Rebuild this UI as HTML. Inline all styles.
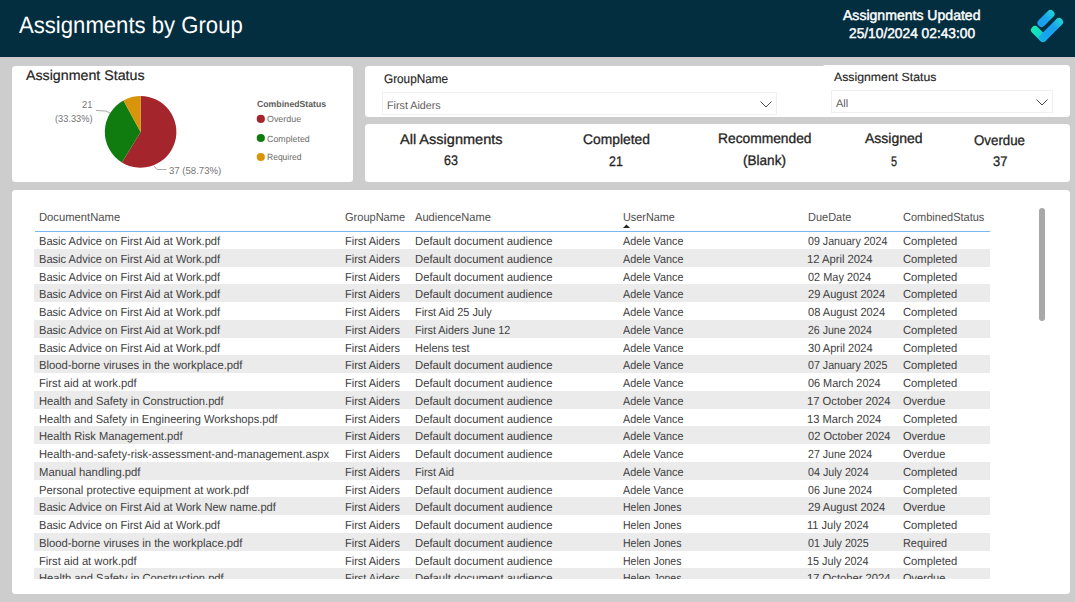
<!DOCTYPE html>
<html><head><meta charset="utf-8"><style>
html,body{margin:0;padding:0;}
body{width:1075px;height:602px;position:relative;overflow:hidden;background:#cdcdcd;font-family:"Liberation Sans",sans-serif;}
.t{position:absolute;white-space:nowrap;text-rendering:geometricPrecision;}
</style></head><body>
<div style="position:absolute;left:0;top:0;width:1075px;height:57px;background:#022e3f"></div>
<div class="t" style="left:18.70px;top:14px;font-size:23.5px;line-height:23.5px;color:#ffffff;transform:scaleX(0.9412);transform-origin:0 0;">Assignments by Group</div>
<div class="t" style="left:843.40px;top:8px;font-size:14.1px;line-height:14.1px;color:#ffffff;transform:scaleX(0.9971);transform-origin:0 0;-webkit-text-stroke:0.45px #fff;">Assignments Updated</div>
<div class="t" style="left:849.40px;top:26px;font-size:14.1px;line-height:14.1px;color:#ffffff;transform:scaleX(0.9752);transform-origin:0 0;-webkit-text-stroke:0.45px #fff;">25/10/2024 02:43:00</div>
<svg style="position:absolute;left:1020px;top:0px" width="55" height="55" viewBox="0 0 55 55">
<defs>
<linearGradient id="g1" gradientUnits="userSpaceOnUse" x1="17.5" y1="27" x2="34.5" y2="10"><stop offset="0" stop-color="#1a9cf0"/><stop offset="0.5" stop-color="#1aa4f0"/><stop offset="0.78" stop-color="#1ec6dc"/><stop offset="1" stop-color="#22d2d6"/></linearGradient>
<linearGradient id="g3" gradientUnits="userSpaceOnUse" x1="19" y1="42" x2="43" y2="18"><stop offset="0" stop-color="#12b8e2"/><stop offset="0.25" stop-color="#18a4ee"/><stop offset="0.62" stop-color="#1aa0f0"/><stop offset="0.85" stop-color="#1ec8dc"/><stop offset="1" stop-color="#22d2d6"/></linearGradient>
<linearGradient id="g2" gradientUnits="userSpaceOnUse" x1="11" y1="26" x2="27" y2="42"><stop offset="0" stop-color="#10ecb6"/><stop offset="0.5" stop-color="#12dcc0"/><stop offset="1" stop-color="#14c0dc"/></linearGradient>
</defs>
<line x1="21.5" y1="23" x2="30.5" y2="14" stroke="url(#g1)" stroke-width="8" stroke-linecap="round"/>
<line x1="15" y1="30" x2="23" y2="38" stroke="url(#g2)" stroke-width="8" stroke-linecap="round"/>
<line x1="23" y1="38" x2="39" y2="22" stroke="url(#g3)" stroke-width="8" stroke-linecap="round"/>
</svg>
<div style="position:absolute;left:12px;top:66px;width:341px;height:116px;background:#fff;border-radius:3.5px"></div>
<div style="position:absolute;left:365px;top:66px;width:705px;height:51px;background:#fff;border-radius:3.5px"></div>
<div style="position:absolute;left:365px;top:124px;width:705px;height:58px;background:#fff;border-radius:3.5px"></div>
<div style="position:absolute;left:822px;top:65px;width:248px;height:20px;background:#fff;border-radius:3.5px 3.5px 0 0"></div>
<div style="position:absolute;left:12px;top:190px;width:1058px;height:404px;background:#fff;border-radius:3.5px"></div>
<div class="t" style="left:25.50px;top:68px;font-size:14.0px;line-height:14.0px;color:#252423;transform:scaleX(1.0154);transform-origin:0 0;-webkit-text-stroke:0.2px #252423;">Assignment Status</div>
<svg style="position:absolute;left:0;top:0" width="360" height="190"><path d="M140.6,131.9 L140.60,96.10 A35.8,35.8 0 1 1 121.93,162.45 Z" fill="#a4262c"/><path d="M140.6,131.9 L121.93,162.45 A35.8,35.8 0 0 1 123.48,100.46 Z" fill="#107c10"/><path d="M140.6,131.9 L123.48,100.46 A35.8,35.8 0 0 1 140.60,96.10 Z" fill="#d9950a"/><polyline points="96,110.5 106,111 110,113" fill="none" stroke="#aaaaaa" stroke-width="1"/><polyline points="154,166 157,169.5 166.5,169.5" fill="none" stroke="#aaaaaa" stroke-width="1"/><circle cx="260.8" cy="118.9" r="4.1" fill="#a4262c"/><circle cx="260.8" cy="138" r="4.1" fill="#107c10"/><circle cx="260.8" cy="157" r="4.1" fill="#d9950a"/></svg>
<div class="t" style="left:81.80px;top:101px;font-size:10.2px;line-height:10.2px;color:#777777;transform:scaleX(0.9182);transform-origin:0 0;">21</div>
<div class="t" style="left:54.70px;top:115px;font-size:10.2px;line-height:10.2px;color:#777777;transform:scaleX(0.9073);transform-origin:0 0;">(33.33%)</div>
<div class="t" style="left:169.00px;top:167px;font-size:10.2px;line-height:10.2px;color:#777777;transform:scaleX(0.9418);transform-origin:0 0;">37 (58.73%)</div>
<div class="t" style="left:256.60px;top:100px;font-size:8.9px;line-height:8.9px;font-weight:700;color:#605e5c;transform:scaleX(0.9803);transform-origin:0 0;">CombinedStatus</div>
<div class="t" style="left:266.90px;top:115px;font-size:9.0px;line-height:9.0px;color:#6e6d6c;transform:scaleX(0.9882);transform-origin:0 0;">Overdue</div>
<div class="t" style="left:266.90px;top:135px;font-size:9.0px;line-height:9.0px;color:#6e6d6c;transform:scaleX(0.9818);transform-origin:0 0;">Completed</div>
<div class="t" style="left:266.90px;top:153px;font-size:9.0px;line-height:9.0px;color:#6e6d6c;transform:scaleX(0.9459);transform-origin:0 0;">Required</div>
<div class="t" style="left:384.00px;top:73px;font-size:12.6px;line-height:12.6px;color:#252423;transform:scaleX(0.9338);transform-origin:0 0;-webkit-text-stroke:0.15px #252423;">GroupName</div>
<div style="position:absolute;left:382px;top:92px;width:394.5px;height:22.5px;border:1px solid #f0f0f0;box-sizing:border-box"></div>
<div class="t" style="left:386.80px;top:101px;font-size:10.9px;line-height:10.9px;color:#605e5c;transform:scaleX(0.9855);transform-origin:0 0;">First Aiders</div>
<svg style="position:absolute;left:760.2px;top:100.8px" width="13" height="8" viewBox="0 0 13 8"><polyline points="0.5,0.5 6,6 11.5,0.5" fill="none" stroke="#4a4a4a" stroke-width="1"/></svg>
<div class="t" style="left:833.80px;top:72px;font-size:11.9px;line-height:11.9px;color:#252423;transform:scaleX(1.0323);transform-origin:0 0;-webkit-text-stroke:0.15px #252423;">Assignment Status</div>
<div style="position:absolute;left:831px;top:90.3px;width:221.5px;height:22.8px;border:1px solid #f0f0f0;box-sizing:border-box"></div>
<div class="t" style="left:836.00px;top:99px;font-size:10.9px;line-height:10.9px;color:#605e5c;transform:scaleX(1.0083);transform-origin:0 0;">All</div>
<svg style="position:absolute;left:1036px;top:99.2px" width="13" height="8" viewBox="0 0 13 8"><polyline points="0.5,0.5 6,6 11.5,0.5" fill="none" stroke="#4a4a4a" stroke-width="1"/></svg>
<div class="t" style="left:399.50px;top:132px;font-size:14.0px;line-height:14.0px;color:#252423;transform:scaleX(1.0374);transform-origin:0 0;-webkit-text-stroke:0.3px #252423;">All Assignments</div>
<div class="t" style="left:444.10px;top:153px;font-size:14.0px;line-height:14.0px;color:#252423;transform:scaleX(0.8933);transform-origin:0 0;-webkit-text-stroke:0.3px #252423;">63</div>
<div class="t" style="left:582.60px;top:132px;font-size:14.0px;line-height:14.0px;color:#252423;transform:scaleX(0.9882);transform-origin:0 0;-webkit-text-stroke:0.3px #252423;">Completed</div>
<div class="t" style="left:609.40px;top:154px;font-size:14.0px;line-height:14.0px;color:#252423;transform:scaleX(0.8867);transform-origin:0 0;-webkit-text-stroke:0.3px #252423;">21</div>
<div class="t" style="left:718.20px;top:131px;font-size:14.0px;line-height:14.0px;color:#252423;transform:scaleX(0.9853);transform-origin:0 0;-webkit-text-stroke:0.3px #252423;">Recommended</div>
<div class="t" style="left:743.40px;top:153px;font-size:14.0px;line-height:14.0px;color:#252423;transform:scaleX(0.9682);transform-origin:0 0;-webkit-text-stroke:0.3px #252423;">(Blank)</div>
<div class="t" style="left:865.40px;top:131px;font-size:14.0px;line-height:14.0px;color:#252423;transform:scaleX(0.9982);transform-origin:0 0;-webkit-text-stroke:0.3px #252423;">Assigned</div>
<div class="t" style="left:890.70px;top:154px;font-size:14.0px;line-height:14.0px;color:#252423;transform:scaleX(0.7750);transform-origin:0 0;-webkit-text-stroke:0.3px #252423;">5</div>
<div class="t" style="left:974.20px;top:133px;font-size:14.0px;line-height:14.0px;color:#252423;transform:scaleX(0.9500);transform-origin:0 0;-webkit-text-stroke:0.3px #252423;">Overdue</div>
<div class="t" style="left:992.60px;top:154px;font-size:14.0px;line-height:14.0px;color:#252423;transform:scaleX(0.9267);transform-origin:0 0;-webkit-text-stroke:0.3px #252423;">37</div>
<div style="position:absolute;left:0;top:0;width:1075px;height:578.9px;overflow:hidden"><div style="position:absolute;left:34.5px;top:231px;width:955.5px;height:1px;background:#7ab8f2"></div><div class="t" style="left:38.90px;top:236px;font-size:11.8px;line-height:11.8px;color:#404040;transform:scaleX(0.9404);transform-origin:0 0;">Basic Advice on First Aid at Work.pdf</div><div class="t" style="left:344.60px;top:236px;font-size:11.8px;line-height:11.8px;color:#404040;transform:scaleX(0.9305);transform-origin:0 0;">First Aiders</div><div class="t" style="left:415.30px;top:236px;font-size:11.8px;line-height:11.8px;color:#404040;transform:scaleX(0.9573);transform-origin:0 0;">Default document audience</div><div class="t" style="left:623.00px;top:236px;font-size:11.8px;line-height:11.8px;color:#404040;transform:scaleX(0.9152);transform-origin:0 0;">Adele Vance</div><div class="t" style="left:807.50px;top:236px;font-size:11.8px;line-height:11.8px;color:#404040;transform:scaleX(0.9034);transform-origin:0 0;">09 January 2024</div><div class="t" style="left:902.90px;top:236px;font-size:11.8px;line-height:11.8px;color:#404040;transform:scaleX(0.9509);transform-origin:0 0;">Completed</div><div style="position:absolute;left:34.3px;top:248.76px;width:955.7px;height:17.76px;background:#ebebeb"></div><div class="t" style="left:38.90px;top:254px;font-size:11.8px;line-height:11.8px;color:#404040;transform:scaleX(0.9404);transform-origin:0 0;">Basic Advice on First Aid at Work.pdf</div><div class="t" style="left:344.60px;top:254px;font-size:11.8px;line-height:11.8px;color:#404040;transform:scaleX(0.9305);transform-origin:0 0;">First Aiders</div><div class="t" style="left:415.30px;top:254px;font-size:11.8px;line-height:11.8px;color:#404040;transform:scaleX(0.9573);transform-origin:0 0;">Default document audience</div><div class="t" style="left:623.00px;top:254px;font-size:11.8px;line-height:11.8px;color:#404040;transform:scaleX(0.9152);transform-origin:0 0;">Adele Vance</div><div class="t" style="left:806.55px;top:254px;font-size:11.8px;line-height:11.8px;color:#404040;transform:scaleX(0.9529);transform-origin:0 0;">12 April 2024</div><div class="t" style="left:902.90px;top:254px;font-size:11.8px;line-height:11.8px;color:#404040;transform:scaleX(0.9509);transform-origin:0 0;">Completed</div><div class="t" style="left:38.90px;top:272px;font-size:11.8px;line-height:11.8px;color:#404040;transform:scaleX(0.9404);transform-origin:0 0;">Basic Advice on First Aid at Work.pdf</div><div class="t" style="left:344.60px;top:272px;font-size:11.8px;line-height:11.8px;color:#404040;transform:scaleX(0.9305);transform-origin:0 0;">First Aiders</div><div class="t" style="left:415.30px;top:272px;font-size:11.8px;line-height:11.8px;color:#404040;transform:scaleX(0.9573);transform-origin:0 0;">Default document audience</div><div class="t" style="left:623.00px;top:272px;font-size:11.8px;line-height:11.8px;color:#404040;transform:scaleX(0.9152);transform-origin:0 0;">Adele Vance</div><div class="t" style="left:807.50px;top:272px;font-size:11.8px;line-height:11.8px;color:#404040;transform:scaleX(0.9265);transform-origin:0 0;">02 May 2024</div><div class="t" style="left:902.90px;top:272px;font-size:11.8px;line-height:11.8px;color:#404040;transform:scaleX(0.9509);transform-origin:0 0;">Completed</div><div style="position:absolute;left:34.3px;top:284.28px;width:955.7px;height:17.76px;background:#ebebeb"></div><div class="t" style="left:38.90px;top:289px;font-size:11.8px;line-height:11.8px;color:#404040;transform:scaleX(0.9404);transform-origin:0 0;">Basic Advice on First Aid at Work.pdf</div><div class="t" style="left:344.60px;top:289px;font-size:11.8px;line-height:11.8px;color:#404040;transform:scaleX(0.9305);transform-origin:0 0;">First Aiders</div><div class="t" style="left:415.30px;top:289px;font-size:11.8px;line-height:11.8px;color:#404040;transform:scaleX(0.9573);transform-origin:0 0;">Default document audience</div><div class="t" style="left:623.00px;top:289px;font-size:11.8px;line-height:11.8px;color:#404040;transform:scaleX(0.9152);transform-origin:0 0;">Adele Vance</div><div class="t" style="left:807.50px;top:289px;font-size:11.8px;line-height:11.8px;color:#404040;transform:scaleX(0.9402);transform-origin:0 0;">29 August 2024</div><div class="t" style="left:902.90px;top:289px;font-size:11.8px;line-height:11.8px;color:#404040;transform:scaleX(0.9509);transform-origin:0 0;">Completed</div><div class="t" style="left:38.90px;top:307px;font-size:11.8px;line-height:11.8px;color:#404040;transform:scaleX(0.9404);transform-origin:0 0;">Basic Advice on First Aid at Work.pdf</div><div class="t" style="left:344.60px;top:307px;font-size:11.8px;line-height:11.8px;color:#404040;transform:scaleX(0.9305);transform-origin:0 0;">First Aiders</div><div class="t" style="left:415.30px;top:307px;font-size:11.8px;line-height:11.8px;color:#404040;transform:scaleX(0.9217);transform-origin:0 0;">First Aid 25 July</div><div class="t" style="left:623.00px;top:307px;font-size:11.8px;line-height:11.8px;color:#404040;transform:scaleX(0.9152);transform-origin:0 0;">Adele Vance</div><div class="t" style="left:807.50px;top:307px;font-size:11.8px;line-height:11.8px;color:#404040;transform:scaleX(0.9402);transform-origin:0 0;">08 August 2024</div><div class="t" style="left:902.90px;top:307px;font-size:11.8px;line-height:11.8px;color:#404040;transform:scaleX(0.9509);transform-origin:0 0;">Completed</div><div style="position:absolute;left:34.3px;top:319.80px;width:955.7px;height:17.76px;background:#ebebeb"></div><div class="t" style="left:38.90px;top:325px;font-size:11.8px;line-height:11.8px;color:#404040;transform:scaleX(0.9404);transform-origin:0 0;">Basic Advice on First Aid at Work.pdf</div><div class="t" style="left:344.60px;top:325px;font-size:11.8px;line-height:11.8px;color:#404040;transform:scaleX(0.9305);transform-origin:0 0;">First Aiders</div><div class="t" style="left:415.30px;top:325px;font-size:11.8px;line-height:11.8px;color:#404040;transform:scaleX(0.9144);transform-origin:0 0;">First Aiders June 12</div><div class="t" style="left:623.00px;top:325px;font-size:11.8px;line-height:11.8px;color:#404040;transform:scaleX(0.9152);transform-origin:0 0;">Adele Vance</div><div class="t" style="left:807.50px;top:325px;font-size:11.8px;line-height:11.8px;color:#404040;transform:scaleX(0.8931);transform-origin:0 0;">26 June 2024</div><div class="t" style="left:902.90px;top:325px;font-size:11.8px;line-height:11.8px;color:#404040;transform:scaleX(0.9509);transform-origin:0 0;">Completed</div><div class="t" style="left:38.90px;top:343px;font-size:11.8px;line-height:11.8px;color:#404040;transform:scaleX(0.9404);transform-origin:0 0;">Basic Advice on First Aid at Work.pdf</div><div class="t" style="left:344.60px;top:343px;font-size:11.8px;line-height:11.8px;color:#404040;transform:scaleX(0.9305);transform-origin:0 0;">First Aiders</div><div class="t" style="left:415.30px;top:343px;font-size:11.8px;line-height:11.8px;color:#404040;transform:scaleX(0.9254);transform-origin:0 0;">Helens test</div><div class="t" style="left:623.00px;top:343px;font-size:11.8px;line-height:11.8px;color:#404040;transform:scaleX(0.9152);transform-origin:0 0;">Adele Vance</div><div class="t" style="left:807.50px;top:343px;font-size:11.8px;line-height:11.8px;color:#404040;transform:scaleX(0.9391);transform-origin:0 0;">30 April 2024</div><div class="t" style="left:902.90px;top:343px;font-size:11.8px;line-height:11.8px;color:#404040;transform:scaleX(0.9509);transform-origin:0 0;">Completed</div><div style="position:absolute;left:34.3px;top:355.32px;width:955.7px;height:17.76px;background:#ebebeb"></div><div class="t" style="left:38.90px;top:360px;font-size:11.8px;line-height:11.8px;color:#404040;transform:scaleX(0.9545);transform-origin:0 0;">Blood-borne viruses in the workplace.pdf</div><div class="t" style="left:344.60px;top:360px;font-size:11.8px;line-height:11.8px;color:#404040;transform:scaleX(0.9305);transform-origin:0 0;">First Aiders</div><div class="t" style="left:415.30px;top:360px;font-size:11.8px;line-height:11.8px;color:#404040;transform:scaleX(0.9573);transform-origin:0 0;">Default document audience</div><div class="t" style="left:623.00px;top:360px;font-size:11.8px;line-height:11.8px;color:#404040;transform:scaleX(0.9152);transform-origin:0 0;">Adele Vance</div><div class="t" style="left:807.50px;top:360px;font-size:11.8px;line-height:11.8px;color:#404040;transform:scaleX(0.9034);transform-origin:0 0;">07 January 2025</div><div class="t" style="left:902.90px;top:360px;font-size:11.8px;line-height:11.8px;color:#404040;transform:scaleX(0.9509);transform-origin:0 0;">Completed</div><div class="t" style="left:38.90px;top:378px;font-size:11.8px;line-height:11.8px;color:#404040;transform:scaleX(0.9485);transform-origin:0 0;">First aid at work.pdf</div><div class="t" style="left:344.60px;top:378px;font-size:11.8px;line-height:11.8px;color:#404040;transform:scaleX(0.9305);transform-origin:0 0;">First Aiders</div><div class="t" style="left:415.30px;top:378px;font-size:11.8px;line-height:11.8px;color:#404040;transform:scaleX(0.9573);transform-origin:0 0;">Default document audience</div><div class="t" style="left:623.00px;top:378px;font-size:11.8px;line-height:11.8px;color:#404040;transform:scaleX(0.9152);transform-origin:0 0;">Adele Vance</div><div class="t" style="left:807.50px;top:378px;font-size:11.8px;line-height:11.8px;color:#404040;transform:scaleX(0.9215);transform-origin:0 0;">06 March 2024</div><div class="t" style="left:902.90px;top:378px;font-size:11.8px;line-height:11.8px;color:#404040;transform:scaleX(0.9509);transform-origin:0 0;">Completed</div><div style="position:absolute;left:34.3px;top:390.84px;width:955.7px;height:17.76px;background:#ebebeb"></div><div class="t" style="left:38.90px;top:396px;font-size:11.8px;line-height:11.8px;color:#404040;transform:scaleX(0.9449);transform-origin:0 0;">Health and Safety in Construction.pdf</div><div class="t" style="left:344.60px;top:396px;font-size:11.8px;line-height:11.8px;color:#404040;transform:scaleX(0.9305);transform-origin:0 0;">First Aiders</div><div class="t" style="left:415.30px;top:396px;font-size:11.8px;line-height:11.8px;color:#404040;transform:scaleX(0.9573);transform-origin:0 0;">Default document audience</div><div class="t" style="left:623.00px;top:396px;font-size:11.8px;line-height:11.8px;color:#404040;transform:scaleX(0.9152);transform-origin:0 0;">Adele Vance</div><div class="t" style="left:806.55px;top:396px;font-size:11.8px;line-height:11.8px;color:#404040;transform:scaleX(0.9494);transform-origin:0 0;">17 October 2024</div><div class="t" style="left:902.90px;top:396px;font-size:11.8px;line-height:11.8px;color:#404040;transform:scaleX(0.9356);transform-origin:0 0;">Overdue</div><div class="t" style="left:38.90px;top:414px;font-size:11.8px;line-height:11.8px;color:#404040;transform:scaleX(0.9388);transform-origin:0 0;">Health and Safety in Engineering Workshops.pdf</div><div class="t" style="left:344.60px;top:414px;font-size:11.8px;line-height:11.8px;color:#404040;transform:scaleX(0.9305);transform-origin:0 0;">First Aiders</div><div class="t" style="left:415.30px;top:414px;font-size:11.8px;line-height:11.8px;color:#404040;transform:scaleX(0.9573);transform-origin:0 0;">Default document audience</div><div class="t" style="left:623.00px;top:414px;font-size:11.8px;line-height:11.8px;color:#404040;transform:scaleX(0.9152);transform-origin:0 0;">Adele Vance</div><div class="t" style="left:806.56px;top:414px;font-size:11.8px;line-height:11.8px;color:#404040;transform:scaleX(0.9436);transform-origin:0 0;">13 March 2024</div><div class="t" style="left:902.90px;top:414px;font-size:11.8px;line-height:11.8px;color:#404040;transform:scaleX(0.9509);transform-origin:0 0;">Completed</div><div style="position:absolute;left:34.3px;top:426.36px;width:955.7px;height:17.76px;background:#ebebeb"></div><div class="t" style="left:38.90px;top:431px;font-size:11.8px;line-height:11.8px;color:#404040;transform:scaleX(0.9434);transform-origin:0 0;">Health Risk Management.pdf</div><div class="t" style="left:344.60px;top:431px;font-size:11.8px;line-height:11.8px;color:#404040;transform:scaleX(0.9305);transform-origin:0 0;">First Aiders</div><div class="t" style="left:415.30px;top:431px;font-size:11.8px;line-height:11.8px;color:#404040;transform:scaleX(0.9573);transform-origin:0 0;">Default document audience</div><div class="t" style="left:623.00px;top:431px;font-size:11.8px;line-height:11.8px;color:#404040;transform:scaleX(0.9152);transform-origin:0 0;">Adele Vance</div><div class="t" style="left:807.50px;top:431px;font-size:11.8px;line-height:11.8px;color:#404040;transform:scaleX(0.9386);transform-origin:0 0;">02 October 2024</div><div class="t" style="left:902.90px;top:431px;font-size:11.8px;line-height:11.8px;color:#404040;transform:scaleX(0.9356);transform-origin:0 0;">Overdue</div><div class="t" style="left:38.90px;top:449px;font-size:11.8px;line-height:11.8px;color:#404040;transform:scaleX(0.9450);transform-origin:0 0;">Health-and-safety-risk-assessment-and-management.aspx</div><div class="t" style="left:344.60px;top:449px;font-size:11.8px;line-height:11.8px;color:#404040;transform:scaleX(0.9305);transform-origin:0 0;">First Aiders</div><div class="t" style="left:415.30px;top:449px;font-size:11.8px;line-height:11.8px;color:#404040;transform:scaleX(0.9573);transform-origin:0 0;">Default document audience</div><div class="t" style="left:623.00px;top:449px;font-size:11.8px;line-height:11.8px;color:#404040;transform:scaleX(0.9152);transform-origin:0 0;">Adele Vance</div><div class="t" style="left:807.50px;top:449px;font-size:11.8px;line-height:11.8px;color:#404040;transform:scaleX(0.8986);transform-origin:0 0;">27 June 2024</div><div class="t" style="left:902.90px;top:449px;font-size:11.8px;line-height:11.8px;color:#404040;transform:scaleX(0.9356);transform-origin:0 0;">Overdue</div><div style="position:absolute;left:34.3px;top:461.88px;width:955.7px;height:17.76px;background:#ebebeb"></div><div class="t" style="left:38.90px;top:467px;font-size:11.8px;line-height:11.8px;color:#404040;transform:scaleX(0.9551);transform-origin:0 0;">Manual handling.pdf</div><div class="t" style="left:344.60px;top:467px;font-size:11.8px;line-height:11.8px;color:#404040;transform:scaleX(0.9305);transform-origin:0 0;">First Aiders</div><div class="t" style="left:415.30px;top:467px;font-size:11.8px;line-height:11.8px;color:#404040;transform:scaleX(0.9163);transform-origin:0 0;">First Aid</div><div class="t" style="left:623.00px;top:467px;font-size:11.8px;line-height:11.8px;color:#404040;transform:scaleX(0.9152);transform-origin:0 0;">Adele Vance</div><div class="t" style="left:807.50px;top:467px;font-size:11.8px;line-height:11.8px;color:#404040;transform:scaleX(0.9075);transform-origin:0 0;">04 July 2024</div><div class="t" style="left:902.90px;top:467px;font-size:11.8px;line-height:11.8px;color:#404040;transform:scaleX(0.9509);transform-origin:0 0;">Completed</div><div class="t" style="left:38.90px;top:485px;font-size:11.8px;line-height:11.8px;color:#404040;transform:scaleX(0.9525);transform-origin:0 0;">Personal protective equipment at work.pdf</div><div class="t" style="left:344.60px;top:485px;font-size:11.8px;line-height:11.8px;color:#404040;transform:scaleX(0.9305);transform-origin:0 0;">First Aiders</div><div class="t" style="left:415.30px;top:485px;font-size:11.8px;line-height:11.8px;color:#404040;transform:scaleX(0.9573);transform-origin:0 0;">Default document audience</div><div class="t" style="left:623.00px;top:485px;font-size:11.8px;line-height:11.8px;color:#404040;transform:scaleX(0.9152);transform-origin:0 0;">Adele Vance</div><div class="t" style="left:807.50px;top:485px;font-size:11.8px;line-height:11.8px;color:#404040;transform:scaleX(0.8986);transform-origin:0 0;">06 June 2024</div><div class="t" style="left:902.90px;top:485px;font-size:11.8px;line-height:11.8px;color:#404040;transform:scaleX(0.9509);transform-origin:0 0;">Completed</div><div style="position:absolute;left:34.3px;top:497.40px;width:955.7px;height:17.76px;background:#ebebeb"></div><div class="t" style="left:38.90px;top:502px;font-size:11.8px;line-height:11.8px;color:#404040;transform:scaleX(0.9391);transform-origin:0 0;">Basic Advice on First Aid at Work New name.pdf</div><div class="t" style="left:344.60px;top:502px;font-size:11.8px;line-height:11.8px;color:#404040;transform:scaleX(0.9305);transform-origin:0 0;">First Aiders</div><div class="t" style="left:415.30px;top:502px;font-size:11.8px;line-height:11.8px;color:#404040;transform:scaleX(0.9573);transform-origin:0 0;">Default document audience</div><div class="t" style="left:623.00px;top:502px;font-size:11.8px;line-height:11.8px;color:#404040;transform:scaleX(0.8909);transform-origin:0 0;">Helen Jones</div><div class="t" style="left:807.50px;top:502px;font-size:11.8px;line-height:11.8px;color:#404040;transform:scaleX(0.9402);transform-origin:0 0;">29 August 2024</div><div class="t" style="left:902.90px;top:502px;font-size:11.8px;line-height:11.8px;color:#404040;transform:scaleX(0.9356);transform-origin:0 0;">Overdue</div><div class="t" style="left:38.90px;top:520px;font-size:11.8px;line-height:11.8px;color:#404040;transform:scaleX(0.9404);transform-origin:0 0;">Basic Advice on First Aid at Work.pdf</div><div class="t" style="left:344.60px;top:520px;font-size:11.8px;line-height:11.8px;color:#404040;transform:scaleX(0.9305);transform-origin:0 0;">First Aiders</div><div class="t" style="left:415.30px;top:520px;font-size:11.8px;line-height:11.8px;color:#404040;transform:scaleX(0.9573);transform-origin:0 0;">Default document audience</div><div class="t" style="left:623.00px;top:520px;font-size:11.8px;line-height:11.8px;color:#404040;transform:scaleX(0.8909);transform-origin:0 0;">Helen Jones</div><div class="t" style="left:806.56px;top:520px;font-size:11.8px;line-height:11.8px;color:#404040;transform:scaleX(0.9354);transform-origin:0 0;">11 July 2024</div><div class="t" style="left:902.90px;top:520px;font-size:11.8px;line-height:11.8px;color:#404040;transform:scaleX(0.9509);transform-origin:0 0;">Completed</div><div style="position:absolute;left:34.3px;top:532.92px;width:955.7px;height:17.76px;background:#ebebeb"></div><div class="t" style="left:38.90px;top:538px;font-size:11.8px;line-height:11.8px;color:#404040;transform:scaleX(0.9545);transform-origin:0 0;">Blood-borne viruses in the workplace.pdf</div><div class="t" style="left:344.60px;top:538px;font-size:11.8px;line-height:11.8px;color:#404040;transform:scaleX(0.9305);transform-origin:0 0;">First Aiders</div><div class="t" style="left:415.30px;top:538px;font-size:11.8px;line-height:11.8px;color:#404040;transform:scaleX(0.9573);transform-origin:0 0;">Default document audience</div><div class="t" style="left:623.00px;top:538px;font-size:11.8px;line-height:11.8px;color:#404040;transform:scaleX(0.8909);transform-origin:0 0;">Helen Jones</div><div class="t" style="left:807.50px;top:538px;font-size:11.8px;line-height:11.8px;color:#404040;transform:scaleX(0.9075);transform-origin:0 0;">01 July 2025</div><div class="t" style="left:902.90px;top:538px;font-size:11.8px;line-height:11.8px;color:#404040;transform:scaleX(0.9208);transform-origin:0 0;">Required</div><div class="t" style="left:38.90px;top:556px;font-size:11.8px;line-height:11.8px;color:#404040;transform:scaleX(0.9485);transform-origin:0 0;">First aid at work.pdf</div><div class="t" style="left:344.60px;top:556px;font-size:11.8px;line-height:11.8px;color:#404040;transform:scaleX(0.9305);transform-origin:0 0;">First Aiders</div><div class="t" style="left:415.30px;top:556px;font-size:11.8px;line-height:11.8px;color:#404040;transform:scaleX(0.9573);transform-origin:0 0;">Default document audience</div><div class="t" style="left:623.00px;top:556px;font-size:11.8px;line-height:11.8px;color:#404040;transform:scaleX(0.8909);transform-origin:0 0;">Helen Jones</div><div class="t" style="left:806.58px;top:556px;font-size:11.8px;line-height:11.8px;color:#404040;transform:scaleX(0.9212);transform-origin:0 0;">15 July 2024</div><div class="t" style="left:902.90px;top:556px;font-size:11.8px;line-height:11.8px;color:#404040;transform:scaleX(0.9509);transform-origin:0 0;">Completed</div><div style="position:absolute;left:34.3px;top:568.44px;width:955.7px;height:17.76px;background:#ebebeb"></div><div class="t" style="left:38.90px;top:573px;font-size:11.8px;line-height:11.8px;color:#404040;transform:scaleX(0.9449);transform-origin:0 0;">Health and Safety in Construction.pdf</div><div class="t" style="left:344.60px;top:573px;font-size:11.8px;line-height:11.8px;color:#404040;transform:scaleX(0.9305);transform-origin:0 0;">First Aiders</div><div class="t" style="left:415.30px;top:573px;font-size:11.8px;line-height:11.8px;color:#404040;transform:scaleX(0.9573);transform-origin:0 0;">Default document audience</div><div class="t" style="left:623.00px;top:573px;font-size:11.8px;line-height:11.8px;color:#404040;transform:scaleX(0.8909);transform-origin:0 0;">Helen Jones</div><div class="t" style="left:806.55px;top:573px;font-size:11.8px;line-height:11.8px;color:#404040;transform:scaleX(0.9494);transform-origin:0 0;">17 October 2024</div><div class="t" style="left:902.90px;top:573px;font-size:11.8px;line-height:11.8px;color:#404040;transform:scaleX(0.9356);transform-origin:0 0;">Overdue</div></div>
<div class="t" style="left:38.90px;top:212px;font-size:11.8px;line-height:11.8px;color:#4f4e4d;transform:scaleX(0.9518);transform-origin:0 0;">DocumentName</div>
<div class="t" style="left:344.60px;top:212px;font-size:11.8px;line-height:11.8px;color:#4f4e4d;transform:scaleX(0.9344);transform-origin:0 0;">GroupName</div>
<div class="t" style="left:415.30px;top:212px;font-size:11.8px;line-height:11.8px;color:#4f4e4d;transform:scaleX(0.9400);transform-origin:0 0;">AudienceName</div>
<div class="t" style="left:623.00px;top:212px;font-size:11.8px;line-height:11.8px;color:#4f4e4d;transform:scaleX(0.9196);transform-origin:0 0;">UserName</div>
<div class="t" style="left:807.50px;top:212px;font-size:11.8px;line-height:11.8px;color:#4f4e4d;transform:scaleX(0.9304);transform-origin:0 0;">DueDate</div>
<div class="t" style="left:902.90px;top:212px;font-size:11.8px;line-height:11.8px;color:#4f4e4d;transform:scaleX(0.9322);transform-origin:0 0;">CombinedStatus</div>
<svg style="position:absolute;left:622px;top:223px" width="10" height="6"><polygon points="1,5 4.5,1.5 8,5" fill="#252423"/></svg>
<div style="position:absolute;left:1039px;top:208px;width:6px;height:113px;background:#a8a8a8;border-radius:3px"></div>
</body></html>
